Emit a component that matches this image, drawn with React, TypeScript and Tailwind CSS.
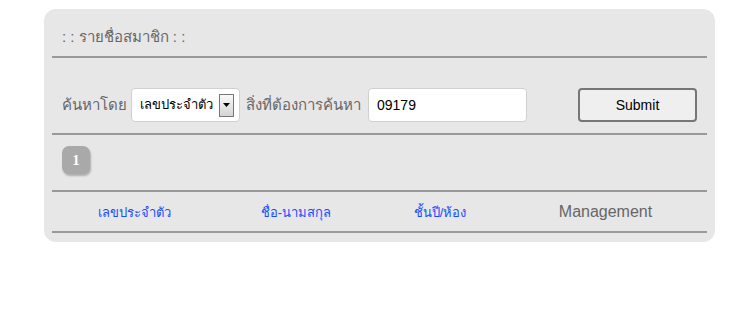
import React from 'react';

const cols = [
  { label: 'เลขประจำตัว', w: 'w-[164px]', link: true },
  { label: 'ชื่อ-นามสกุล', w: 'w-[160px]', link: true },
  { label: 'ชั้นปี/ห้อง', w: 'w-[128px]', link: true },
  { label: 'Management', w: 'flex-1', link: false },
];

export default function App() {
  return (
    <div className="w-[740px] h-[327px] bg-white font-['Tahoma','Liberation_Sans',sans-serif]">
      <div className="pt-[9px] pl-[44px]">
        <div className="w-[671px] h-[233px] bg-[#e7e7e7] rounded-[12px] px-2 flex flex-col">
          {/* title */}
          <div className="h-[47px] flex items-center pl-[10px] pt-[10px] text-[15px] text-[#666]">
            : : รายชื่อสมาชิก : :
          </div>
          <div className="h-[2px] bg-[#999]" />

          {/* search */}
          <div className="h-[75px] flex items-center pl-[10px] pt-[19px] text-[15px] text-[#666]">
            <span className="w-[64px] whitespace-nowrap">ค้นหาโดย</span>
            <div className="ml-[5px] w-[109px] h-[34px] bg-white border border-[#d0d0d0] rounded-[4px] flex items-center pl-[8px] pr-[5px] justify-between">
              <span className="text-[13px] text-black">เลขประจำตัว</span>
              <div className="w-[15px] h-[23px] border border-[#777] bg-gradient-to-b from-[#fafafa] to-[#d4d4d4] flex items-center justify-center">
                <svg width="7" height="4" viewBox="0 0 7 4">
                  <path d="M0 0h7L3.5 4z" fill="#000" />
                </svg>
              </div>
            </div>
            <span className="ml-[6px] w-[118px] whitespace-nowrap">สิ่งที่ต้องการค้นหา</span>
            <div className="ml-[4px] w-[159px] h-[34px] bg-white border border-[#d0d0d0] rounded-[4px] flex items-center pl-[8px] text-[14px] text-black font-['Liberation_Sans',sans-serif]">
              09179
            </div>
            <button className="ml-[51px] w-[119px] h-[34px] bg-[#efefef] border-2 border-[#767676] rounded-[4px] text-[14px] text-black font-['Liberation_Sans',sans-serif]">
              Submit
            </button>
          </div>
          <div className="h-[2px] bg-[#999]" />

          {/* pagination */}
          <div className="h-[55px] flex items-center pl-[10px] pb-[5px]">
            <div className="w-[28px] h-[28px] rounded-[7px] bg-[#a9a9a9] shadow-[1px_2px_2px_rgba(0,0,0,0.25)] flex items-center justify-center text-white font-bold text-[15px] font-['Liberation_Serif',serif]">
              1
            </div>
          </div>
          <div className="h-[2px] bg-[#999]" />

          {/* header */}
          <div className="h-[39px] flex items-center">
            {cols.map((c) => (
              <div key={c.label} className={`${c.w} text-center`}>
                {c.link ? (
                  <a className="text-[13px] text-[#1a4dff] cursor-pointer">{c.label}</a>
                ) : (
                  <span className="text-[16px] text-[#666] font-['Liberation_Sans',sans-serif]">{c.label}</span>
                )}
              </div>
            ))}
          </div>
          <div className="h-[2px] bg-[#999]" />
        </div>
      </div>
    </div>
  );
}
